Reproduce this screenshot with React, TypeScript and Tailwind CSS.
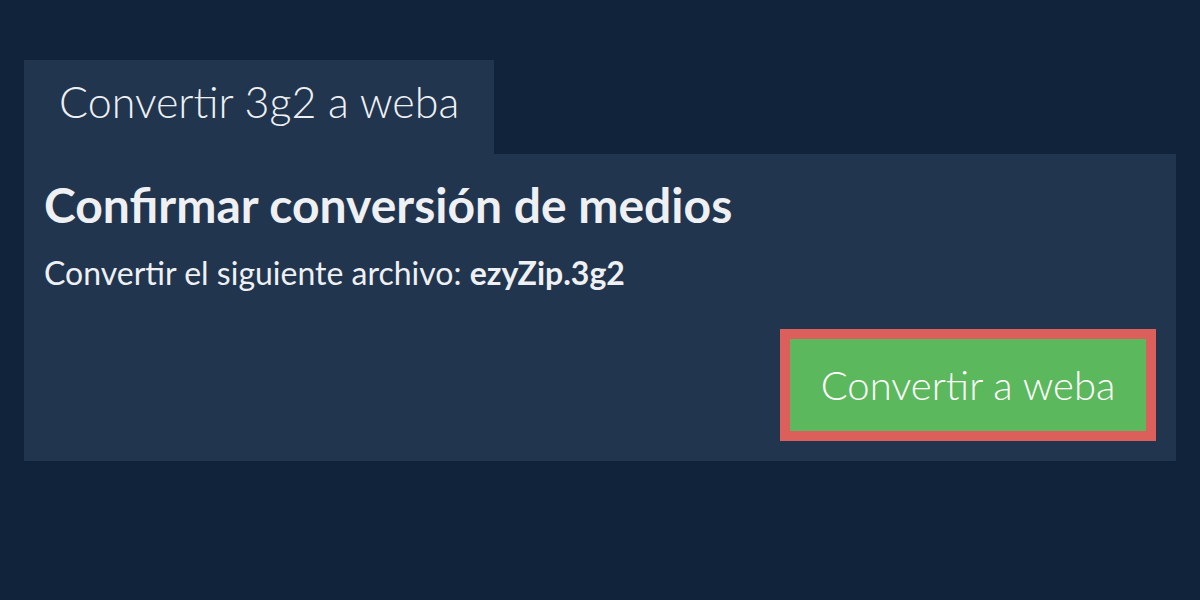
export default function App() {
  return (
    <div
      className="w-full h-[600px] bg-[#10233a] px-6 pt-[60px]"
      style={{ fontFamily: "Lato, 'Noto Sans', sans-serif" }}
    >
      <div className="w-[470px] h-[94px] bg-[#21354f] flex items-center pl-[35px] pb-[12px]">
        <span className="text-[43px] font-light text-[#eef0f3] leading-none">
          Convertir 3g2 a weba
        </span>
      </div>
      <div className="h-[307px] bg-[#21354f] flex flex-col px-5 pt-[22px] pb-5">
        <h1 className="text-[48px] font-bold text-[#eef0f3] leading-[1.2]">
          Confirmar conversión de medios
        </h1>
        <p className="mt-[20px] text-[32px] text-[#eef0f3] leading-[1.2]">
          Convertir el siguiente archivo: <span className="font-bold">ezyZip.3g2</span>
        </p>
        <div className="mt-auto flex justify-end">
          <button className="w-[376px] h-[112px] border-[10px] border-[#dc5f5c] bg-[#5cb85c] text-white text-[40px] font-light leading-none">
            Convertir a weba
          </button>
        </div>
      </div>
    </div>
  );
}
